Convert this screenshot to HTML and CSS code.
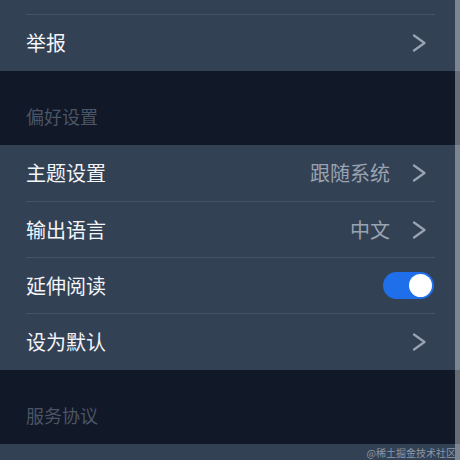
FILE: index.html
```html
<!DOCTYPE html>
<html>
<head>
    <title>设置</title>
    <meta name="viewport" content="width=device-width, initial-scale=1">
    <link rel="stylesheet" href="styles.css">
</head>
<body>
    <div class="page">
        <!-- report -->
        <div class="group group-top">
            <div class="row">
                <span class="label">举报</span>
                <span class="right">
                    <svg class="chev" viewBox="0 0 14 18"><path d="M2 1.5 L12.5 9 L2 16.5"/></svg>
                </span>
            </div>
        </div>

        <div class="section-title">偏好设置</div>
        <div class="group">
            <div class="row">
                <span class="label">主题设置</span>
                <span class="right">
                    <span class="value">跟随系统</span>
                    <svg class="chev" viewBox="0 0 14 18"><path d="M2 1.5 L12.5 9 L2 16.5"/></svg>
                </span>
            </div>
            <div class="row">
                <span class="label">输出语言</span>
                <span class="right">
                    <span class="value">中文</span>
                    <svg class="chev" viewBox="0 0 14 18"><path d="M2 1.5 L12.5 9 L2 16.5"/></svg>
                </span>
            </div>
            <div class="row">
                <span class="label">延伸阅读</span>
                <label class="switch">
                    <input type="checkbox" checked>
                    <span class="slider"></span>
                </label>
            </div>
            <div class="row">
                <span class="label">设为默认</span>
                <span class="right">
                    <svg class="chev" viewBox="0 0 14 18"><path d="M2 1.5 L12.5 9 L2 16.5"/></svg>
                </span>
            </div>
        </div>

        <div class="section-title">服务协议</div>
        <div class="group group-bottom"></div>
    </div>

    <div class="scrollbar"></div>
    <div class="watermark">@稀土掘金技术社区</div>
</body>
</html>
```

FILE: styles.css
```css
html {font-family: "Noto Sans CJK SC", "Noto Sans", sans-serif;}
body {margin: 0; background: #111827; width: 460px; height: 460px; overflow: hidden; position: relative;}

.page {display: flex; flex-direction: column;}

.group {background: #334155; padding: 0 25px 0 26px;}
.group-top {padding-top: 14px;}
.group-top .row {border-top: 1px solid #46546a; border-bottom: none; height: 55px;}
.group-bottom {height: 30px;}

.row {display: flex; align-items: center; justify-content: space-between; height: 55px; border-bottom: 1px solid #46546a;}
.row:first-child {height: 56px;}
.row:last-child {border-bottom: none; height: 56px;}

.label {font-size: 20px; color: #f3f5f8; line-height: 24px;}
.right {display: flex; align-items: center; gap: 22px; padding-right: 9px;}
.value {font-size: 20px; color: #9aa3b1; line-height: 24px;}

.chev {width: 14px; height: 18px; fill: none; stroke: #9aa3b1; stroke-width: 2.2; stroke-linecap: round; stroke-linejoin: round;}

.section-title {height: 74px; box-sizing: border-box; padding: 34px 26px 0; font-size: 18px; line-height: 22px; color: #4b5566;}

.switch {position: relative; display: inline-block; width: 51px; height: 27px; margin-right: 1px;}
.switch input {display: none;}
.slider {position: absolute; top: 0; left: 0; right: 0; bottom: 0; background: #1f6fea; border-radius: 14px;}
.slider:before {position: absolute; content: ""; width: 23px; height: 23px; left: 2px; top: 2px; background: #fff; border-radius: 50%;}
input:checked + .slider:before {transform: translateX(24px);}

/* thin bar on the right edge */
.scrollbar {position: absolute; top: 0; right: 0; width: 5px; height: 460px; background: rgba(255, 255, 255, 0.36);}

.watermark {position: absolute; right: 4px; bottom: 1px; font-size: 10px; line-height: 12px; color: #8d96a4;}
```
